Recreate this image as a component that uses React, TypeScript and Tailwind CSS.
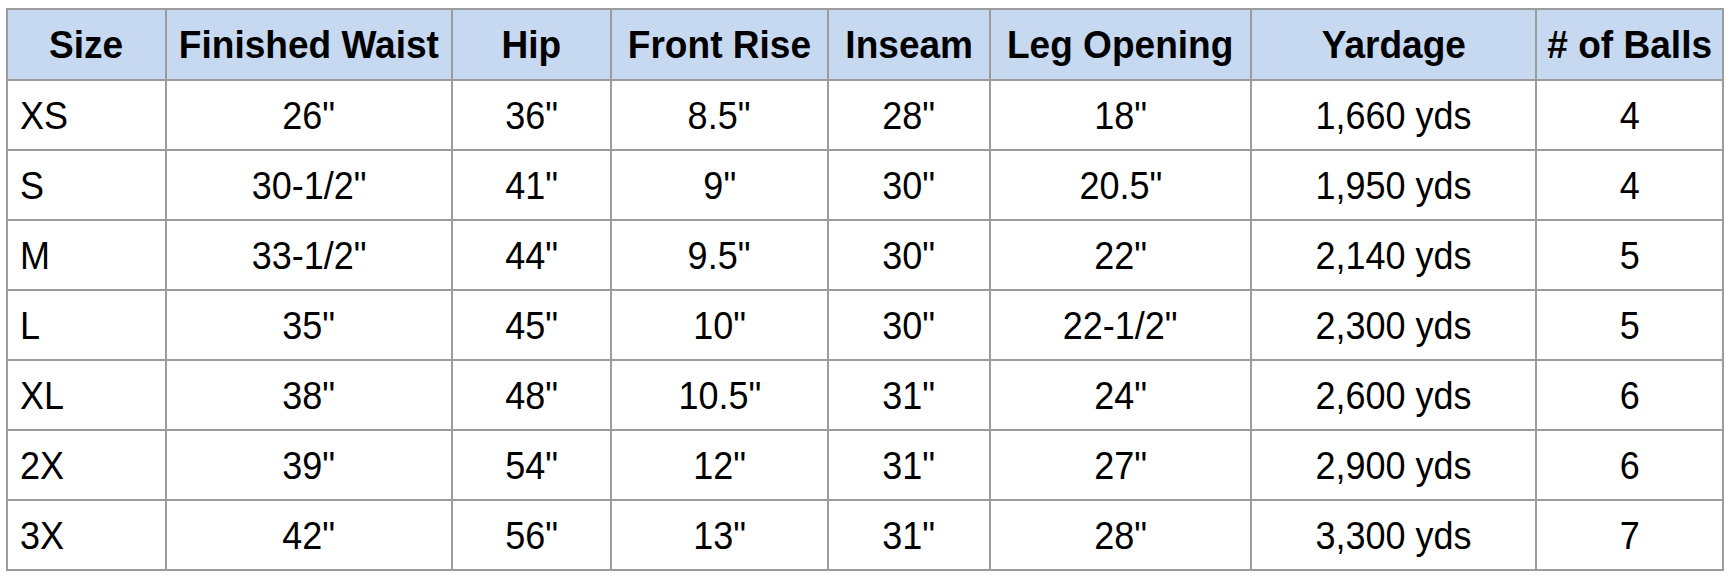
const headers = [
  "Size",
  "Finished Waist",
  "Hip",
  "Front Rise",
  "Inseam",
  "Leg Opening",
  "Yardage",
  "# of Balls",
];

const widths = [159, 286, 159, 217, 162, 261, 285, 187];

const rows = [
  ["XS", '26"', '36"', '8.5"', '28"', '18"', "1,660 yds", "4"],
  ["S", '30-1/2"', '41"', '9"', '30"', '20.5"', "1,950 yds", "4"],
  ["M", '33-1/2"', '44"', '9.5"', '30"', '22"', "2,140 yds", "5"],
  ["L", '35"', '45"', '10"', '30"', '22-1/2"', "2,300 yds", "5"],
  ["XL", '38"', '48"', '10.5"', '31"', '24"', "2,600 yds", "6"],
  ["2X", '39"', '54"', '12"', '31"', '27"', "2,900 yds", "6"],
  ["3X", '42"', '56"', '13"', '31"', '28"', "3,300 yds", "7"],
];

export default function App() {
  return (
    <div className="w-[1735px] h-[581px] bg-white pl-[6px] pt-[8px] font-['Liberation_Sans',Arial,sans-serif] text-black">
      <table className="table-fixed border-collapse border-2 border-[#9c9c9c]">
        <colgroup>
          {widths.map((w, i) => (
            <col key={i} style={{ width: w }} />
          ))}
        </colgroup>
        <thead>
          <tr className="h-[71px] bg-[#c6d9f0]">
            {headers.map((h) => (
              <th
                key={h}
                className="border-2 border-[#9c9c9c] p-0 text-center text-[39px] font-bold leading-none"
              >
                <span className="inline-block scale-x-[0.95] whitespace-nowrap">{h}</span>
              </th>
            ))}
          </tr>
        </thead>
        <tbody>
          {rows.map((r) => (
            <tr key={r[0]} className="h-[70px]">
              {r.map((c, i) => (
                <td
                  key={i}
                  className={
                    "border-2 border-[#9c9c9c] p-0 text-[39px] leading-none " +
                    (i === 0 ? "pl-[12px] text-left" : "text-center")
                  }
                >
                  <span
                    className={
                      "inline-block scale-x-[0.923] whitespace-nowrap " +
                      (i === 0 ? "origin-left" : "")
                    }
                  >
                    {c}
                  </span>
                </td>
              ))}
            </tr>
          ))}
        </tbody>
      </table>
    </div>
  );
}
